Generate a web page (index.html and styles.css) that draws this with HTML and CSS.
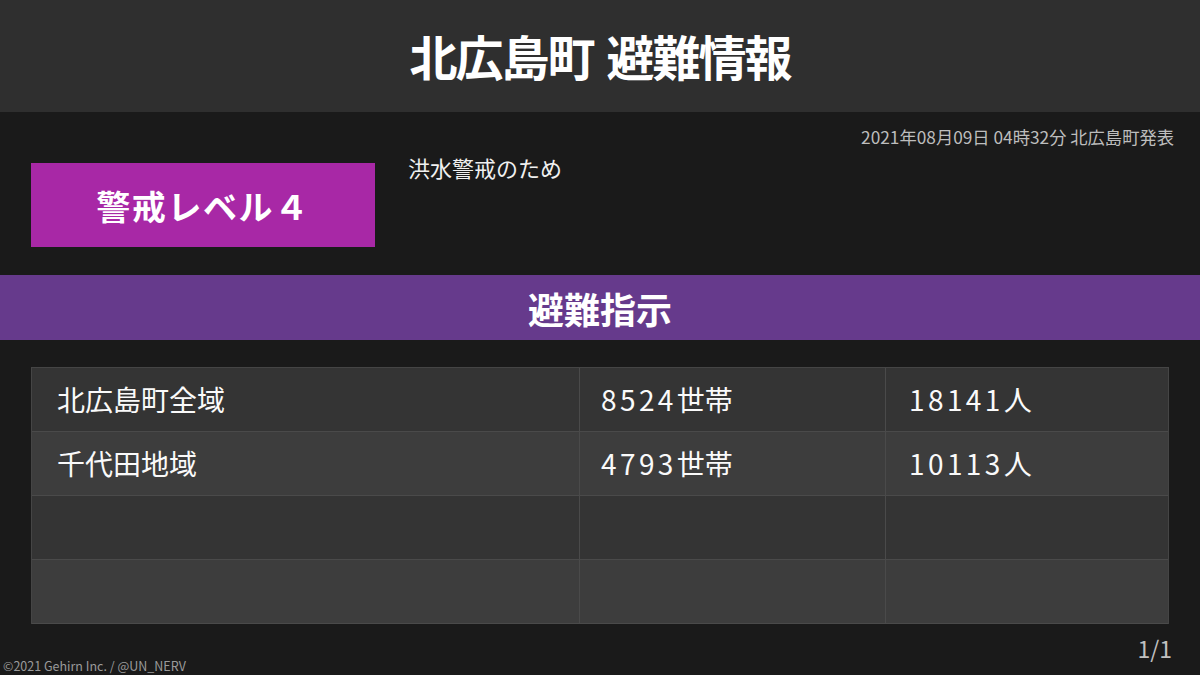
FILE: index.html
```html
<!DOCTYPE html>
<html lang="ja">
<head>
<meta charset="utf-8">
<link rel="stylesheet" href="styles.css">
</head>
<body>
<div class="page">
  <header class="header"><h1 class="title">北広島町 避難情報</h1></header>
  <section class="info">
    <div class="stamp">2021年08月09日 04時32分 北広島町発表</div>
    <div class="info-row">
      <div class="level">警戒レベル４</div>
      <div class="reason">洪水警戒のため</div>
    </div>
  </section>
  <div class="band">避難指示</div>
  <div class="table">
    <div class="row odd"><div class="cell c1">北広島町全域</div><div class="cell c2"><span class="num">8524</span>世帯</div><div class="cell c3"><span class="num">18141</span>人</div></div>
    <div class="row even"><div class="cell c1">千代田地域</div><div class="cell c2"><span class="num">4793</span>世帯</div><div class="cell c3"><span class="num">10113</span>人</div></div>
    <div class="row odd"><div class="cell c1"></div><div class="cell c2"></div><div class="cell c3"></div></div>
    <div class="row even"><div class="cell c1"></div><div class="cell c2"></div><div class="cell c3"></div></div>
  </div>
  <div class="pager">1/1</div>
  <div class="copy">©2021 Gehirn Inc. / @UN_NERV</div>
</div>
</body>
</html>
```
FILE: styles.css
```css
html, body { margin: 0; padding: 0; }
body {
  background: #1a1a1a;
  font-family: "Noto Sans CJK JP", "Noto Sans", sans-serif;
  color: #fff;
  width: 1200px;
  height: 675px;
  overflow: hidden;
}
.page { position: relative; width: 1200px; height: 675px; }
.header {
  height: 112px;
  background: #2f2f2f;
  display: flex;
  align-items: center;
  justify-content: center;
}
.title {
  margin: 0;
  font-size: 48px;
  font-weight: 700;
  line-height: 1;
  letter-spacing: -2px;
  word-spacing: 4px;
  padding-bottom: 2px;
}
.info { height: 163px; position: relative; }
.stamp {
  position: absolute;
  right: 26px;
  top: 13px;
  font-size: 17.3px;
  line-height: 24px;
  color: #bdbdbd;
}
.info-row {
  display: flex;
  padding: 51px 0 0 31px;
}
.level {
  width: 344px;
  height: 84px;
  background: #a828a6;
  display: flex;
  align-items: center;
  justify-content: center;
  font-size: 34px;
  font-weight: 700;
  letter-spacing: 1.6px;
}
.reason {
  margin-left: 33px;
  margin-top: -11px;
  font-size: 22px;
  line-height: 30px;
  color: #f0f0f0;
}
.band {
  height: 65px;
  background: #663a8c;
  display: flex;
  align-items: center;
  justify-content: center;
  font-size: 36px;
  font-weight: 700;
}
.table {
  margin: 27px 31px 0 31px;
  width: 1136px;
  border-top: 1px solid #454545;
  border-left: 1px solid #454545;
  border-right: 1px solid #454545;
}
.row {
  display: grid;
  grid-template-columns: 547px 306px 1fr;
  height: 64px;
  border-bottom: 1px solid #4a4a4a;
  box-sizing: border-box;
}
.row.odd { background: #343434; }
.row.even { background: #3d3d3d; }
.cell {
  display: flex;
  align-items: center;
  padding-left: 25px;
  font-size: 28px;
  color: #fafafa;
  padding-bottom: 2px;
}
.c2, .c3 { border-left: 1px solid #4a4a4a; padding-left: 21px; }
.c3 { padding-left: 23px; }
.num { letter-spacing: 3.4px; }
.pager {
  position: absolute;
  right: 28px;
  top: 632px;
  font-size: 23px;
  line-height: 32px;
  color: #c0c0c0;
}
.copy {
  position: absolute;
  left: 3px;
  top: 657px;
  font-size: 12.5px;
  line-height: 18px;
  color: #9a9a9a;
}
```
